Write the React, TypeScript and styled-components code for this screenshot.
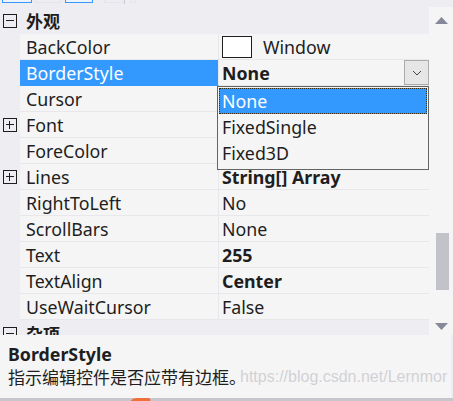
import React from "react";
import styled, { createGlobalStyle } from "styled-components";

const Global = createGlobalStyle`
  html, body { margin: 0; padding: 0; background: #eeeef2; }
  body { width: 453px; height: 401px; overflow: hidden; }
  * { box-sizing: border-box; }
`;

const FONT = `"Segoe UI", "Noto Sans", "Noto Sans CJK SC", sans-serif`;

const Page = styled.div`
  width: 453px;
  height: 401px;
  position: relative;
  background: #eeeef2;
  font-family: ${FONT};
  font-size: 17.8px;
  color: #1e1e1e;
  overflow: hidden;
`;

const Toolbar = styled.div`
  height: 7px;
  display: flex;
  align-items: flex-end;
  position: relative;
`;

const ToolButton = styled.div<{ $w: number; $ml: number; $active?: boolean }>`
  width: ${(p) => p.$w}px;
  height: 10px;
  margin-left: ${(p) => p.$ml}px;
  align-self: flex-start;
  margin-top: -7px;
  border: 1px solid ${(p) => (p.$active ? "#3399ff" : "#e4e4ea")};
  background: ${(p) => (p.$active ? "#eef3fb" : "transparent")};
`;

const ToolSep = styled.div<{ $ml: number }>`
  width: 1px;
  height: 4px;
  margin-left: ${(p) => p.$ml}px;
  align-self: flex-start;
  background: #c8c8d0;
`;

const Body = styled.div`
  display: flex;
  height: 328px;
  overflow: hidden;
`;

const Grid = styled.div`
  width: 429px;
  height: 328px;
  display: flex;
  flex-direction: column;
  position: relative;
  overflow: hidden;
`;

const CatRow = styled.div`
  height: 27px;
  display: flex;
  align-items: center;
  background: #eeeef2;
  font-weight: bold;
  font-family: "Noto Sans CJK SC", sans-serif;
  font-size: 17px;
  flex-shrink: 0;
`;

const Gutter = styled.div`
  width: 20px;
  flex-shrink: 0;
  display: flex;
  justify-content: center;
  align-items: center;
  height: 100%;
  background: #eeeef2;
`;

const Expander = styled.div`
  width: 14px;
  height: 14px;
  border: 1px solid #1e1e1e;
  position: relative;
  margin-left: -1px;
  &::before {
    content: "";
    position: absolute;
    left: 2px;
    right: 2px;
    top: 5px;
    height: 1px;
    background: #1e1e1e;
  }
`;

const ExpanderPlus = styled(Expander)`
  &::after {
    content: "";
    position: absolute;
    top: 2px;
    bottom: 2px;
    left: 5px;
    width: 1px;
    background: #1e1e1e;
  }
`;

const CatLabel = styled.div`
  padding-left: 6px;
`;

const Row = styled.div`
  height: 26px;
  display: flex;
  flex-shrink: 0;
`;

const NameCell = styled.div<{ $selected?: boolean }>`
  width: 199px;
  flex-shrink: 0;
  padding-left: 6px;
  display: flex;
  align-items: center;
  background: ${(p) => (p.$selected ? "#3399ff" : "#f5f5f5")};
  color: ${(p) => (p.$selected ? "#ffffff" : "#1e1e1e")};
  border-bottom: 1px solid ${(p) => (p.$selected ? "#3399ff" : "#e8e8ec")};
  border-right: 1px solid #e8e8ec;
  white-space: nowrap;
`;

const ValueCell = styled.div<{ $bold?: boolean }>`
  flex: 1;
  display: flex;
  align-items: center;
  padding-left: 3px;
  background: #f5f5f5;
  border-bottom: 1px solid #e8e8ec;
  font-weight: ${(p) => (p.$bold ? "bold" : "normal")};
  white-space: nowrap;
  position: relative;
`;

const Swatch = styled.div`
  width: 30px;
  height: 22px;
  background: #ffffff;
  border: 1px solid #1e1e1e;
  margin-right: 11px;
`;

const DropButton = styled.div`
  position: absolute;
  right: 0px;
  top: 0px;
  width: 25px;
  height: 25px;
  background: #e6e6e6;
  border: 1px solid #acacac;
  display: flex;
  align-items: center;
  justify-content: center;
`;

const DropList = styled.div`
  position: absolute;
  left: 217px;
  top: 79px;
  width: 212px;
  height: 84px;
  background: #f5f5f5;
  border: 1px solid #646464;
  display: flex;
  flex-direction: column;
  padding: 1px 1px 0 1px;
  z-index: 2;
`;

const DropItem = styled.div<{ $selected?: boolean }>`
  height: 26px;
  display: flex;
  align-items: center;
  padding-left: 3px;
  background: ${(p) => (p.$selected ? "#3399ff" : "transparent")};
  color: ${(p) => (p.$selected ? "#ffffff" : "#1e1e1e")};
  outline: ${(p) => (p.$selected ? "1px dotted #3a2a10" : "none")};
  outline-offset: -1px;
`;

const ScrollBar = styled.div`
  width: 24px;
  background: #f5f5f5;
  display: flex;
  flex-direction: column;
  align-items: center;
  justify-content: space-between;
  padding: 10px 0 5px;
  height: 328px;
  position: relative;
`;

const Thumb = styled.div`
  position: absolute;
  left: 7px;
  top: 226px;
  width: 13px;
  height: 57px;
  background: #c2c3c9;
`;

const Desc = styled.div`
  position: absolute;
  left: 0;
  top: 335px;
  width: 451px;
  height: 63px;
  background: #f5f5f5;
  padding: 8px 8px 0 8px;
  z-index: 3;
`;

const DescTitle = styled.div`
  font-weight: bold;
  font-size: 17.8px;
  line-height: 22px;
`;

const DescText = styled.div`
  font-family: "Noto Sans CJK SC", sans-serif;
  font-size: 17px;
  line-height: 24px;
  position: relative;
`;

const Watermark = styled.span`
  position: absolute;
  left: 232px;
  top: 0;
  font-family: "Liberation Sans", Arial, sans-serif;
  font-size: 16px;
  color: rgba(200, 200, 205, 0.8);
  white-space: nowrap;
`;

const BottomLine = styled.div`
  position: absolute;
  left: 0;
  top: 398px;
  width: 453px;
  height: 3px;
  background: #c6c6cc;
`;

const OrangeMark = styled.div`
  position: absolute;
  left: 131px;
  top: 398px;
  width: 20px;
  height: 4px;
  background: #f0703a;
  border-radius: 6px 6px 0 0;
  transform: skewX(-30deg);
`;

type Prop = {
  name: string;
  value?: string;
  bold?: boolean;
  plus?: boolean;
  selected?: boolean;
  swatch?: boolean;
  dropdown?: boolean;
};

// Values of Cursor, Font and ForeColor are hidden beneath the open dropdown list.
const props: Prop[] = [
  { name: "BackColor", value: "Window", swatch: true },
  { name: "BorderStyle", value: "None", bold: true, selected: true, dropdown: true },
  { name: "Cursor" },
  { name: "Font", plus: true },
  { name: "ForeColor" },
  { name: "Lines", value: "String[] Array", bold: true, plus: true },
  { name: "RightToLeft", value: "No" },
  { name: "ScrollBars", value: "None" },
  { name: "Text", value: "255", bold: true },
  { name: "TextAlign", value: "Center", bold: true },
  { name: "UseWaitCursor", value: "False" },
];

const Chevron = () => (
  <svg width="10" height="6" viewBox="0 0 10 6">
    <path d="M1 1 L5 5 L9 1" fill="none" stroke="#444" strokeWidth="1" />
  </svg>
);

const Arrow = ({ up }: { up?: boolean }) => (
  <svg width="13" height="7" viewBox="0 0 13 7">
    <path d={up ? "M0 7 L6.5 0 L13 7 Z" : "M0 0 L6.5 7 L13 0 Z"} fill="#868999" />
  </svg>
);

export default function App() {
  return (
    <Page>
      <Global />
      <Toolbar>
        <ToolButton $w={30} $ml={2} $active />
        <ToolButton $w={26} $ml={3} />
        <ToolButton $w={28} $ml={4} $active />
        <ToolButton $w={19} $ml={11} />
        <ToolSep $ml={1} />
        <ToolButton $w={6} $ml={5} />
      </Toolbar>
      <Body>
        <Grid>
          <CatRow>
            <Gutter>
              <Expander />
            </Gutter>
            <CatLabel>外观</CatLabel>
          </CatRow>
          {props.map((p) => (
            <Row key={p.name}>
              <Gutter>{p.plus ? <ExpanderPlus /> : null}</Gutter>
              <NameCell $selected={p.selected}>{p.name}</NameCell>
              <ValueCell $bold={p.bold}>
                {p.swatch && <Swatch />}
                {p.value}
                {p.dropdown && (
                  <DropButton>
                    <Chevron />
                  </DropButton>
                )}
              </ValueCell>
            </Row>
          ))}
          <CatRow>
            <Gutter>
              <Expander />
            </Gutter>
            <CatLabel>杂项</CatLabel>
          </CatRow>
          <DropList>
            <DropItem $selected>None</DropItem>
            <DropItem>FixedSingle</DropItem>
            <DropItem>Fixed3D</DropItem>
          </DropList>
        </Grid>
        <ScrollBar>
          <Arrow up />
          <Thumb />
          <Arrow />
        </ScrollBar>
      </Body>
      <Desc>
        <DescTitle>BorderStyle</DescTitle>
        <DescText>
          指示编辑控件是否应带有边框。
          <Watermark>https://blog.csdn.net/Lernmor</Watermark>
        </DescText>
      </Desc>
      <BottomLine />
      <OrangeMark />
    </Page>
  );
}
